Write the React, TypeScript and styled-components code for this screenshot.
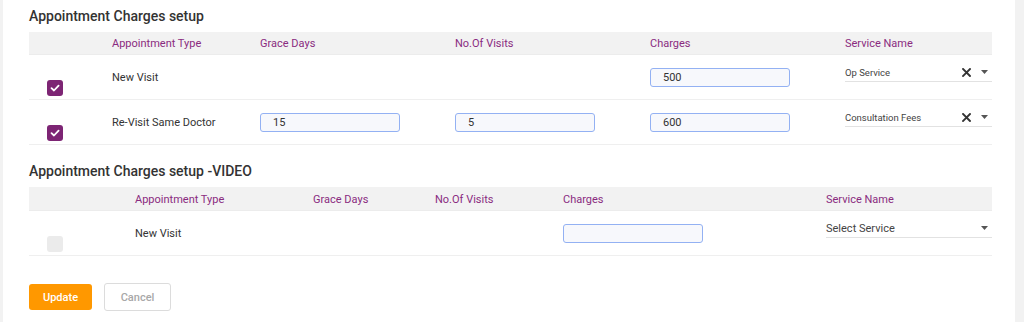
import React from "react";
import styled, { createGlobalStyle } from "styled-components";

const GlobalStyle = createGlobalStyle`
  html, body { margin: 0; padding: 0; }
  body {
    background: #f2f2f2;
    font-family: Roboto, "Liberation Sans", Arial, sans-serif;
    color: #333;
  }
  * { box-sizing: border-box; }
`;

const Card = styled.div`
  margin-left: 3px;
  width: 1012px;
  min-height: 322px;
  background: #fff;
  padding: 0 23px 0 26px;
`;

const Section = styled.section<{ $top: number }>`
  padding-top: ${(p) => p.$top}px;
`;

const Title = styled.h2`
  margin: 0 0 8px 0;
  font-size: 14px;
  line-height: 16px;
  font-weight: 500;
  color: #333;
`;

const Grid = styled.div<{ $cols: string }>`
  display: grid;
  grid-template-columns: ${(p) => p.$cols};
`;

const HeadRow = styled(Grid)<{ $h: number }>`
  height: ${(p) => p.$h}px;
  background: #f2f2f2;
  align-items: center;
  border-bottom: 1px solid #ececec;
`;

const HeadCell = styled.div`
  font-size: 11px;
  color: #8a2b80;
  padding-top: 1px;
`;

const BodyRow = styled(Grid)`
  height: 45px;
  border-bottom: 1px solid #efefef;
  align-items: center;
`;

const Cell = styled.div`
  font-size: 11px;
  color: #333;
  display: flex;
  align-items: center;
`;

const CheckCell = styled.div<{ $top: number }>`
  align-self: start;
  padding-top: ${(p) => p.$top}px;
  padding-left: 18px;
`;

const Check = styled.span<{ $on: boolean }>`
  display: flex;
  align-items: center;
  justify-content: center;
  width: 16px;
  height: 16px;
  border-radius: 3px;
  background: ${(p) => (p.$on ? "#7d2574" : "#ebebeb")};
`;

const Input = styled.div`
  width: 140px;
  height: 19px;
  border: 1px solid #93b1f3;
  border-radius: 3px;
  background: #f7f8fc;
  padding-left: 12px;
  font-size: 11px;
  line-height: 17px;
  color: #333;
`;

const SelectBox = styled.div<{ $top: number; $size: number }>`
  align-self: start;
  margin-top: ${(p) => p.$top}px;
  height: 19px;
  display: flex;
  align-items: center;
  border-bottom: 1px solid #e2e2e2;
  font-size: ${(p) => p.$size}px;
  color: #444;
`;

const SelectText = styled.span`
  flex: 1;
`;

const Clear = styled.span`
  display: flex;
  margin-right: 10px;
`;

const Caret = styled.span`
  display: flex;
  margin-right: 4px;
`;

const Actions = styled.div`
  display: flex;
  align-items: center;
  gap: 12px;
  margin-top: 27px;
`;

const Button = styled.button<{ $primary?: boolean }>`
  font-family: Roboto, "Liberation Sans", Arial, sans-serif;
  font-size: 11px;
  font-weight: 500;
  border-radius: 3px;
  cursor: pointer;
  height: ${(p) => (p.$primary ? 26 : 28)}px;
  width: ${(p) => (p.$primary ? 63 : 67)}px;
  background: ${(p) => (p.$primary ? "#ff9800" : "#fff")};
  color: ${(p) => (p.$primary ? "#fff" : "#a8a8a8")};
  border: ${(p) => (p.$primary ? "none" : "1px solid #dcdcdc")};
  padding: 0;
`;

const CheckMark = () => (
  <svg width="10" height="8" viewBox="0 0 10 8">
    <path d="M1.5 4.2 L4 6.5 L8.6 1.6" fill="none" stroke="#fff" strokeWidth="1.8" strokeLinecap="round" strokeLinejoin="round" />
  </svg>
);

const XIcon = () => (
  <svg width="9" height="9" viewBox="0 0 9 9">
    <path d="M1 1 L8 8 M8 1 L1 8" stroke="#333" strokeWidth="1.9" strokeLinecap="square" />
  </svg>
);

const CaretIcon = () => (
  <svg width="7" height="4" viewBox="0 0 7 4">
    <path d="M0 0 L7 0 L3.5 4 Z" fill="#555" />
  </svg>
);

const COLS1 = "83px 148px 195px 195px 195px 147px";
const COLS2 = "106px 178px 122px 128px 263px 166px";

type Row1 = { name: string; grace?: string; visits?: string; charges: string; service: string };

const rows1: Row1[] = [
  { name: "New Visit", charges: "500", service: "Op Service" },
  { name: "Re-Visit Same Doctor", grace: "15", visits: "5", charges: "600", service: "Consultation Fees" },
];

export default function App() {
  return (
    <>
      <GlobalStyle />
      <Card>
        <Section $top={8}>
          <Title>Appointment Charges setup</Title>
          <HeadRow $cols={COLS1} $h={23}>
            <div />
            <HeadCell>Appointment Type</HeadCell>
            <HeadCell>Grace Days</HeadCell>
            <HeadCell>No.Of Visits</HeadCell>
            <HeadCell>Charges</HeadCell>
            <HeadCell>Service Name</HeadCell>
          </HeadRow>
          {rows1.map((r) => (
            <BodyRow key={r.name} $cols={COLS1}>
              <CheckCell $top={25}>
                <Check $on>
                  <CheckMark />
                </Check>
              </CheckCell>
              <Cell>{r.name}</Cell>
              <Cell>{r.grace !== undefined && <Input>{r.grace}</Input>}</Cell>
              <Cell>{r.visits !== undefined && <Input>{r.visits}</Input>}</Cell>
              <Cell>
                <Input>{r.charges}</Input>
              </Cell>
              <SelectBox $top={8} $size={9.5}>
                <SelectText>{r.service}</SelectText>
                <Clear>
                  <XIcon />
                </Clear>
                <Caret>
                  <CaretIcon />
                </Caret>
              </SelectBox>
            </BodyRow>
          ))}
        </Section>
        <Section $top={18}>
          <Title>Appointment Charges setup -VIDEO</Title>
          <HeadRow $cols={COLS2} $h={24}>
            <div />
            <HeadCell>Appointment Type</HeadCell>
            <HeadCell>Grace Days</HeadCell>
            <HeadCell>No.Of Visits</HeadCell>
            <HeadCell>Charges</HeadCell>
            <HeadCell>Service Name</HeadCell>
          </HeadRow>
          <BodyRow $cols={COLS2}>
            <CheckCell $top={25}>
              <Check $on={false} />
            </CheckCell>
            <Cell>New Visit</Cell>
            <Cell />
            <Cell />
            <Cell>
              <Input />
            </Cell>
            <SelectBox $top={8} $size={11}>
              <SelectText>Select Service</SelectText>
              <Caret>
                <CaretIcon />
              </Caret>
            </SelectBox>
          </BodyRow>
        </Section>
        <Actions>
          <Button $primary>Update</Button>
          <Button>Cancel</Button>
        </Actions>
      </Card>
    </>
  );
}
